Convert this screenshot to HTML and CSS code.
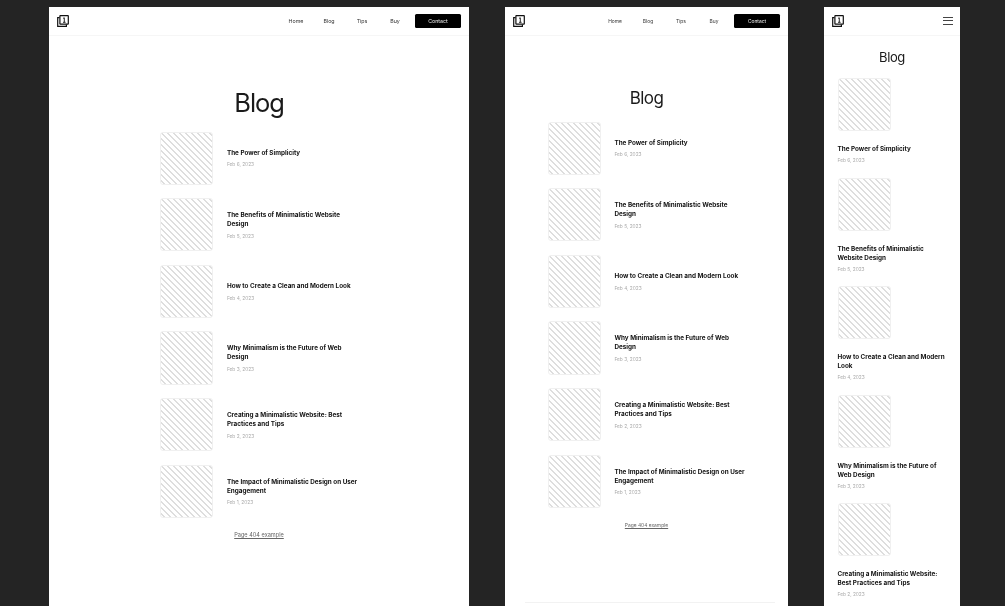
FILE: index.html
```html
<!DOCTYPE html>
<html lang="en">
<head>
<meta charset="utf-8">
<title>Blog</title>
<link rel="stylesheet" href="styles.css">
</head>
<body>
<svg class="defs" width="0" height="0" aria-hidden="true">
  <symbol id="logo" viewBox="0 0 12 12">
    <path d="M2.6 2.6H.7v8.7h8.7V9.4" fill="none" stroke="#111" stroke-width="1.2"/>
    <rect x="2.9" y=".7" width="8.4" height="8.4" rx=".4" fill="#fff" stroke="#111" stroke-width="1.2"/>
    <path d="M6.1 3.3 7.3 2.8V7.3M6 7.3H8.6" fill="none" stroke="#111" stroke-width=".9"/>
  </symbol>
</svg>

<section class="frame frame-desktop">
  <header class="topbar">
    <svg class="logo"><use href="#logo"/></svg>
    <nav class="nav">
      <a>Home</a><a>Blog</a><a>Tips</a><a>Buy</a><a class="contact">Contact</a>
    </nav>
  </header>
  <main class="content">
    <h1 class="title">Blog</h1>
    <ul class="posts">
      <li class="post"><div class="thumb"></div><div class="text"><h2>The Power of Simplicity</h2><time>Feb 6, 2023</time></div></li>
      <li class="post"><div class="thumb"></div><div class="text"><h2>The Benefits of Minimalistic Website Design</h2><time>Feb 5, 2023</time></div></li>
      <li class="post"><div class="thumb"></div><div class="text"><h2>How to Create a Clean and Modern Look</h2><time>Feb 4, 2023</time></div></li>
      <li class="post"><div class="thumb"></div><div class="text"><h2>Why Minimalism is the Future of Web Design</h2><time>Feb 3, 2023</time></div></li>
      <li class="post"><div class="thumb"></div><div class="text"><h2>Creating a Minimalistic Website: Best Practices and Tips</h2><time>Feb 2, 2023</time></div></li>
      <li class="post"><div class="thumb"></div><div class="text"><h2>The Impact of Minimalistic Design on User Engagement</h2><time>Feb 1, 2023</time></div></li>
    </ul>
    <a class="example">Page 404 example</a>
  </main>
</section>

<section class="frame frame-tablet">
  <header class="topbar">
    <svg class="logo"><use href="#logo"/></svg>
    <nav class="nav">
      <a>Home</a><a>Blog</a><a>Tips</a><a>Buy</a><a class="contact">Contact</a>
    </nav>
  </header>
  <main class="content">
    <h1 class="title">Blog</h1>
    <ul class="posts">
      <li class="post"><div class="thumb"></div><div class="text"><h2>The Power of Simplicity</h2><time>Feb 6, 2023</time></div></li>
      <li class="post"><div class="thumb"></div><div class="text"><h2>The Benefits of Minimalistic Website Design</h2><time>Feb 5, 2023</time></div></li>
      <li class="post"><div class="thumb"></div><div class="text"><h2>How to Create a Clean and Modern Look</h2><time>Feb 4, 2023</time></div></li>
      <li class="post"><div class="thumb"></div><div class="text"><h2>Why Minimalism is the Future of Web Design</h2><time>Feb 3, 2023</time></div></li>
      <li class="post"><div class="thumb"></div><div class="text"><h2>Creating a Minimalistic Website: Best Practices and Tips</h2><time>Feb 2, 2023</time></div></li>
      <li class="post"><div class="thumb"></div><div class="text"><h2>The Impact of Minimalistic Design on User Engagement</h2><time>Feb 1, 2023</time></div></li>
    </ul>
    <a class="example">Page 404 example</a>
    <div class="footer-rule"></div>
  </main>
</section>

<section class="frame frame-mobile">
  <header class="topbar">
    <svg class="logo"><use href="#logo"/></svg>
    <button class="menu" aria-label="Menu"><span></span><span></span><span></span></button>
  </header>
  <main class="content">
    <h1 class="title">Blog</h1>
    <ul class="posts">
      <li class="post"><div class="thumb"></div><div class="text"><h2>The Power of Simplicity</h2><time>Feb 6, 2023</time></div></li>
      <li class="post"><div class="thumb"></div><div class="text"><h2>The Benefits of Minimalistic Website Design</h2><time>Feb 5, 2023</time></div></li>
      <li class="post"><div class="thumb"></div><div class="text"><h2>How to Create a Clean and Modern Look</h2><time>Feb 4, 2023</time></div></li>
      <li class="post"><div class="thumb"></div><div class="text"><h2>Why Minimalism is the Future of Web Design</h2><time>Feb 3, 2023</time></div></li>
      <li class="post"><div class="thumb"></div><div class="text"><h2>Creating a Minimalistic Website: Best Practices and Tips</h2><time>Feb 2, 2023</time></div></li>
    </ul>
  </main>
</section>
</body>
</html>
```

FILE: styles.css
```css
* { box-sizing: border-box; }

html, body { height: 100%; }

body {
  margin: 0;
  height: 606px;
  overflow: hidden;
  display: flex;
  gap: 36px;
  padding: 7px 0 0 49px;
  background: #242424;
  font-family: Inter, "Liberation Sans", sans-serif;
  color: #111;
}

.defs { position: absolute; }

.frame {
  flex: none;
  height: 599px;
  background: #fff;
  overflow: hidden;
  filter: blur(.35px);
}
.frame-desktop { width: 420px; }
.frame-tablet { width: 283px; }
.frame-mobile { width: 136px; }

.topbar {
  height: 28.5px;
  padding: 0 8px;
  display: flex;
  align-items: center;
  justify-content: space-between;
  border-bottom: 1px solid #f6f6f6;
}

.logo { width: 12px; height: 12px; display: block; margin-top: 0; }

.nav {
  display: flex;
  align-items: center;
  font-size: 5.3px;
  color: #333;
}
.nav a { width: 33px; text-align: center; }

.nav .contact {
  width: 46px;
  height: 14px;
  margin-left: 3.5px;
  display: flex;
  align-items: center;
  justify-content: center;
  background: #000;
  color: #eee;
  border-radius: 1.5px;
}

.frame-tablet .nav { font-size: 4.9px; }

.menu {
  width: 10px;
  height: 8px;
  margin: 0 -.5px 0 0;
  padding: 0;
  border: 0;
  background: none;
  display: flex;
  flex-direction: column;
  justify-content: space-between;
}
.menu span { display: block; height: 1px; background: #444; }

.content {
  display: flex;
  flex-direction: column;
  align-items: center;
}

.title {
  margin: 0;
  font-weight: 400;
  color: #1a1a1a;
  text-align: center;
}
.frame-desktop .title { font-size: 25.5px; letter-spacing: -1.1px; line-height: 30px; padding: 52.5px 0 13.5px; }
.frame-tablet .title { font-size: 17px; letter-spacing: -.6px; line-height: 20px; padding: 52px 0 14px; }
.frame-mobile .title { font-size: 13px; letter-spacing: -.4px; line-height: 16px; padding: 13px 0 13.5px; }

.posts {
  list-style: none;
  margin: 0;
  padding: 0;
  width: 198px;
  display: flex;
  flex-direction: column;
  gap: 13.33px;
}

.post {
  display: flex;
  align-items: center;
  gap: 13.6px;
}

.thumb {
  flex: none;
  width: 53.33px;
  height: 53.33px;
  border: .5px solid #f0f0f0;
  border-radius: 3px;
  background-image: linear-gradient(45deg, #dedede 12%, #fff 12%, #fff 50%, #dedede 50%, #dedede 62%, #fff 62%, #fff 100%);
  background-size: 6px 6px;
}

.text h2 {
  margin: 0;
  font-size: 6.35px;
  line-height: 9px;
  font-weight: 700;
  color: #111;
}

.text time {
  display: block;
  margin-top: 3.5px;
  font-size: 4.8px;
  line-height: 6px;
  color: #aaa;
}

.example {
  margin-top: 13px;
  font-size: 5.6px;
  line-height: 8px;
  color: #666;
  text-decoration: underline;
}

.frame-tablet .example { font-size: 4.9px; margin-top: 12.5px; }

.footer-rule {
  width: 250px;
  height: 1px;
  margin: 73.5px 0 0 6px;
  background: #f2f2f2;
}

.frame-mobile .posts { width: 109px; gap: 0; }
.frame-mobile .post { flex-direction: column; align-items: flex-start; gap: 14px; margin-bottom: 14.2px; }
.frame-mobile .text time { margin-top: 3px; }
```
